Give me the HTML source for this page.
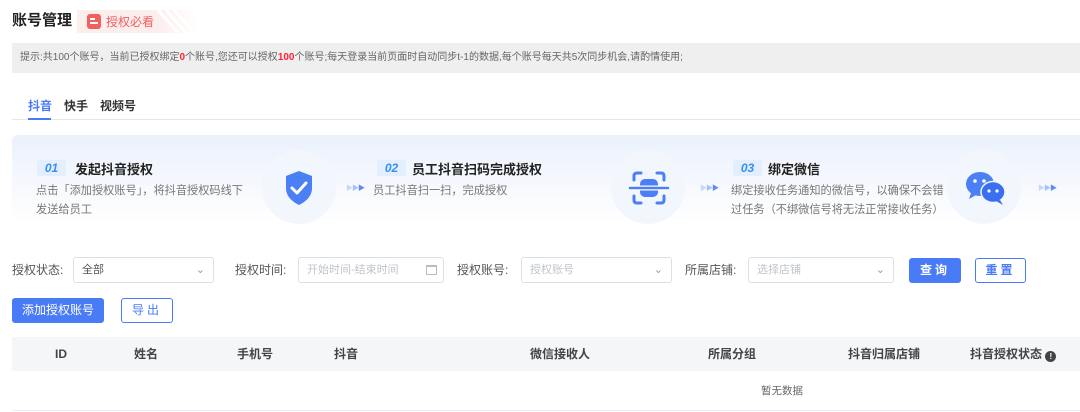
<!DOCTYPE html>
<html><head><meta charset="utf-8"><style>
*{margin:0;padding:0;box-sizing:border-box}
body{width:1080px;height:412px;overflow:hidden;background:#fff;font-family:"Liberation Sans","Noto Sans CJK SC",sans-serif;color:#333;position:relative}
.a{position:absolute;white-space:nowrap}
.sel{position:absolute;border:1px solid #dcdfe6;border-radius:3px;height:26px;font-size:11px;color:#c0c4cc;padding:0 8px;line-height:24px}
.lbl{position:absolute;font-size:12px;color:#555;line-height:26px}
.btn{position:absolute;height:25px;border-radius:3px;font-size:12px;line-height:23px;text-align:center}
.bp{background:#4a7bf7;color:#fff;border:1px solid #4a7bf7}
.bo{background:#fff;color:#4a7bf7;border:1px solid #4a7bf7}
.num{position:absolute;width:29px;height:16px;background:#e3efff;color:#3a8ef6;font-style:italic;font-weight:bold;font-size:12px;text-align:center;line-height:16px;border-radius:2px}
.st{position:absolute;font-size:13px;font-weight:bold;color:#222}
.ds{position:absolute;font-size:11.2px;color:#777;line-height:19px}
.circ{position:absolute;width:74px;height:74px;border-radius:50%;background:radial-gradient(circle,#f1f5fd 0%,#f3f6fd 70%,#f6f8fe 100%)}
.arr{position:absolute;font-size:7px;color:#5b8cf5;letter-spacing:-1px}
.th{position:absolute;top:337px;height:34px;line-height:34px;font-size:12px;font-weight:bold;color:#444}
</style></head><body>
<div class="a" style="left:12px;top:10px;font-size:15px;font-weight:bold;color:#222;line-height:22px">账号管理</div>
<div class="a" style="left:77px;top:10px;width:120px;height:23px;background:linear-gradient(90deg,#fdeeee 70%,rgba(253,238,238,0));"></div>
<svg class="a" style="left:150px;top:10px" width="50" height="23"><g stroke="#fff" stroke-width="3"><line x1="8" y1="0" x2="28" y2="23"/><line x1="16" y1="0" x2="36" y2="23"/><line x1="24" y1="0" x2="44" y2="23"/></g></svg>
<div class="a" style="left:87px;top:14px;width:14px;height:15px;background:#f0605f;border-radius:3px"></div>
<div class="a" style="left:90px;top:18px;width:5px;height:2px;background:#fff"></div>
<div class="a" style="left:90px;top:22px;width:8px;height:2px;background:#fff"></div>
<div class="a" style="left:106px;top:12px;font-size:12px;color:#f0605f;line-height:20px">授权必看</div>
<div class="a" style="left:12px;top:43px;width:1068px;height:30px;background:#efefef"></div>
<div class="a" style="left:20px;top:50px;font-size:10px;color:#666;line-height:16px">提示:共100个账号，当前已授权绑定<b style="color:#f23">0</b>个账号,您还可以授权<b style="color:#f23">100</b>个账号;每天登录当前页面时自动同步t-1的数据,每个账号每天共5次同步机会,请酌情使用;</div>
<div class="a" style="left:28px;top:97px;font-size:12px;font-weight:bold;color:#4a7bf7;line-height:18px">抖音</div>
<div class="a" style="left:64px;top:97px;font-size:12px;font-weight:bold;color:#333;line-height:18px">快手</div>
<div class="a" style="left:100px;top:97px;font-size:12px;font-weight:bold;color:#333;line-height:18px">视频号</div>
<div class="a" style="left:12px;top:119px;width:1068px;height:1px;background:#e4e7ed"></div>
<div class="a" style="left:28px;top:118px;width:23px;height:2px;background:#4a7bf7"></div>
<div class="a" style="left:12px;top:135px;width:1068px;height:88px;border-radius:6px 0 0 6px;background:linear-gradient(180deg,#eaf1fc 0%,#f7f9fe 60%,#fff 100%)"></div>
<div class="num" style="left:37px;top:160px">01</div>
<div class="st" style="left:75px;top:159px">发起抖音授权</div>
<div class="ds" style="left:36px;top:182px">点击「添加授权账号」，将抖音授权码线下<br>发送给员工</div>
<div class="circ" style="left:262px;top:150px"></div>
<svg class="a" style="left:284px;top:170px" width="30" height="36" viewBox="0 0 30 36"><path d="M15 1 L28 6 L28 18 C28 27 21 32 15 35 C9 32 2 27 2 18 L2 6 Z" fill="#4a7ff5"/><path d="M8 18 L13 23 L22 13" stroke="#fff" stroke-width="3" fill="none" stroke-linecap="round" stroke-linejoin="round"/></svg>
<div class="arr" style="left:346px;top:183px"><span style="opacity:.3">▶</span><span style="opacity:.5">▶</span>▶</div>
<div class="num" style="left:377px;top:160px">02</div>
<div class="st" style="left:412px;top:159px">员工抖音扫码完成授权</div>
<div class="ds" style="left:373px;top:182px">员工抖音扫一扫，完成授权</div>
<div class="circ" style="left:611px;top:150px"></div>
<svg class="a" style="left:628px;top:170px" width="42" height="36" viewBox="0 0 42 36"><g stroke="#4a7ff5" stroke-width="3" fill="none" stroke-linecap="round"><path d="M6 10 V6 Q6 3 9 3 H13"/><path d="M29 3 H33 Q36 3 36 6 V10"/><path d="M6 26 V30 Q6 33 9 33 H13"/><path d="M29 33 H33 Q36 33 36 30 V26"/></g><rect x="12" y="9" width="18" height="18" rx="5" fill="#4a7ff5"/><line x1="2" y1="18" x2="40" y2="18" stroke="#fff" stroke-width="5"/><line x1="2" y1="18" x2="40" y2="18" stroke="#4a7ff5" stroke-width="2.5" stroke-linecap="round"/></svg>
<div class="arr" style="left:700px;top:183px"><span style="opacity:.3">▶</span><span style="opacity:.5">▶</span>▶</div>
<div class="num" style="left:733px;top:160px">03</div>
<div class="st" style="left:768px;top:159px">绑定微信</div>
<div class="ds" style="left:731px;top:182px">绑定接收任务通知的微信号，以确保不会错<br>过任务（不绑微信号将无法正常接收任务）</div>
<div class="circ" style="left:947px;top:150px"></div>
<svg class="a" style="left:965px;top:170px" width="42" height="36" viewBox="0 0 42 36"><ellipse cx="15" cy="14" rx="14" ry="12" fill="#4a7ff5"/><path d="M6 23 L4 29 L11 25Z" fill="#4a7ff5"/><ellipse cx="28" cy="22" rx="12" ry="10.5" fill="#3a6ff0" stroke="#f2f6fd" stroke-width="1.5"/><path d="M35 30 L38 35 L31 31Z" fill="#3a6ff0"/><circle cx="10" cy="11" r="1.8" fill="#fff"/><circle cx="19" cy="11" r="1.8" fill="#fff"/><circle cx="24" cy="21" r="1.6" fill="#fff"/><circle cx="32" cy="21" r="1.6" fill="#fff"/></svg>
<div class="arr" style="left:1038px;top:183px"><span style="opacity:.3">▶</span><span style="opacity:.5">▶</span>▶</div>

<div class="lbl" style="left:12px;top:257px">授权状态:</div>
<div class="sel" style="left:73px;top:257px;width:141px;color:#555">全部<span style="position:absolute;right:8px;color:#999">⌄</span></div>
<div class="lbl" style="left:235px;top:257px">授权时间:</div>
<div class="sel" style="left:298px;top:257px;width:146px">开始时间-结束时间<span style="position:absolute;right:6px;top:7px;width:11px;height:10px;border:1px solid #bbb;border-top-width:2px"></span></div>
<div class="lbl" style="left:457px;top:257px">授权账号:</div>
<div class="sel" style="left:521px;top:257px;width:151px">授权账号<span style="position:absolute;right:8px;color:#999">⌄</span></div>
<div class="lbl" style="left:685px;top:257px">所属店铺:</div>
<div class="sel" style="left:748px;top:257px;width:146px">选择店铺<span style="position:absolute;right:8px;color:#999">⌄</span></div>
<div class="btn bp" style="left:909px;top:258px;width:52px;letter-spacing:3px;font-weight:bold">查询</div>
<div class="btn bo" style="left:975px;top:258px;width:51px;letter-spacing:3px;font-weight:bold">重置</div>
<div class="btn bp" style="left:12px;top:298px;width:92px">添加授权账号</div>
<div class="btn bo" style="left:121px;top:298px;width:52px;letter-spacing:3px">导出</div>

<div class="a" style="left:12px;top:337px;width:1068px;height:34px;background:#f5f6f7"></div>
<div class="th" style="left:55px">ID</div>
<div class="th" style="left:134px">姓名</div>
<div class="th" style="left:237px">手机号</div>
<div class="th" style="left:334px">抖音</div>
<div class="th" style="left:530px">微信接收人</div>
<div class="th" style="left:708px">所属分组</div>
<div class="th" style="left:848px">抖音归属店铺</div>
<div class="th" style="left:970px">抖音授权状态 <span style="display:inline-block;width:11px;height:11px;border-radius:50%;background:#444;color:#fff;font-size:8px;line-height:11px;text-align:center;vertical-align:-1px">!</span></div>
<div class="a" style="left:761px;top:383px;font-size:10.5px;color:#666;line-height:16px">暂无数据</div>
<div class="a" style="left:12px;top:410px;width:1068px;height:1px;background:#ebeef5"></div>
</body></html>
